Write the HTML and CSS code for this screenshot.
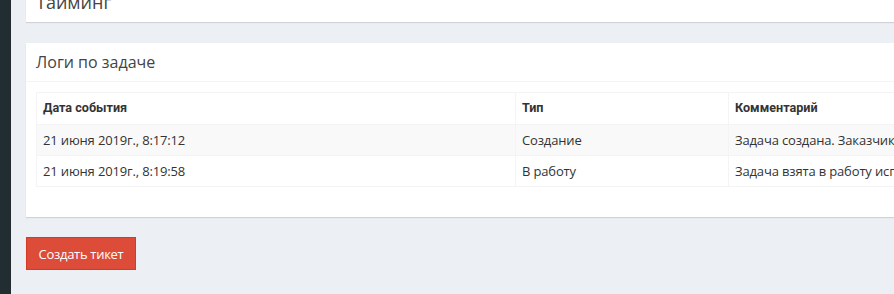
FILE: index.html
```html
<!DOCTYPE html>
<html lang="ru">
  <head>
    <meta charset="UTF-8" />
    <meta name="viewport" content="width=device-width, initial-scale=1.0" />
    <title>Задача</title>
    <link rel="stylesheet" href="styles.css">
  </head>
  <body>
    <div class="wrapper">
      <aside class="sidebar"></aside>
      <main class="content">
        <div class="box box-first">
          <div class="box-header no-border">
            <h3 class="box-title title-lg">Таиминг</h3>
          </div>
        </div>

        <div class="box">
          <div class="box-header">
            <h3 class="box-title">Логи по задаче</h3>
          </div>
          <div class="box-body">
            <table class="log-table">
              <tr>
                <th class="col-date">Дата события</th>
                <th class="col-type">Тип</th>
                <th>Комментарий</th>
              </tr>
              <tr class="odd">
                <td>21 июня 2019г., 8:17:12</td>
                <td>Создание</td>
                <td>Задача создана. Заказчик</td>
              </tr>
              <tr>
                <td>21 июня 2019г., 8:19:58</td>
                <td>В работу</td>
                <td>Задача взята в работу исполнителем</td>
              </tr>
            </table>
          </div>
        </div>

        <button class="btn btn-danger">Создать тикет</button>
      </main>
    </div>
  </body>
</html>
```

FILE: styles.css
```css
html,
body {
  margin: 0;
  height: 100%;
  overflow: hidden;
}
body {
  background-color: #ecf0f5;
  font-family: "Open Sans", "Noto Sans", sans-serif;
  color: #333;
}
.wrapper {
  display: flex;
  height: 100%;
}
.sidebar {
  flex: 0 0 11px;
  background-color: #222d32;
}
.content {
  flex: 0 0 1100px;
  padding: 0 15px;
}
.box {
  background-color: #fff;
  box-shadow: 0 1px 1px rgba(0, 0, 0, 0.12);
  margin-bottom: 20px;
}
.box-first {
  margin-top: -20px;
  margin-bottom: 21px;
}
.box-header {
  padding: 10px;
  border-bottom: 1px solid #f4f4f4;
}
.box-header.no-border {
  border-bottom: none;
  padding: 10px 10px 8px;
}
.box-title {
  margin: 0;
  font-size: 16px;
  font-weight: normal;
  line-height: 18px;
  color: #444;
}
.title-lg {
  font-size: 18px;
  line-height: 24px;
}
.box-body {
  padding: 10px;
}
.log-table {
  width: 100%;
  border-collapse: collapse;
  margin-bottom: 20px;
  font-size: 13px;
}
.log-table th,
.log-table td {
  border: 1px solid #f4f4f4;
  padding: 7px 6px;
  line-height: 16px;
  text-align: left;
  white-space: nowrap;
  letter-spacing: -0.15px;
}
.log-table th {
  font-family: Roboto, "Noto Sans", sans-serif;
  font-size: 12.6px;
  font-weight: bold;
  letter-spacing: 0;
  padding-bottom: 8px;
  color: #333;
}
.log-table .odd {
  background-color: #f9f9f9;
}
.col-date {
  width: 466px;
}
.col-type {
  width: 200px;
}
.btn {
  font-family: "Open Sans", "Noto Sans", sans-serif;
  font-size: 13px;
  letter-spacing: -0.3px;
  padding: 0;
  height: 33px;
  width: 110px;
  white-space: nowrap;
  color: #fff;
  cursor: pointer;
}
.btn-danger {
  background-color: #dd4b39;
  border: 1px solid #d73925;
}
```
